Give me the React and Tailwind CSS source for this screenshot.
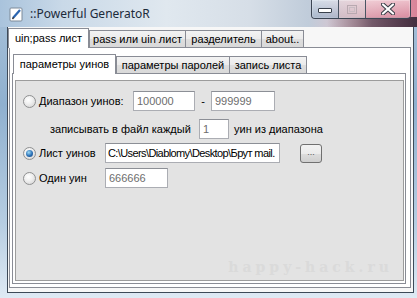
const Radio = ({ checked }) => (
  <span className="ml-[7px] w-[13px] h-[13px] rounded-full border border-[#8f9091] bg-[radial-gradient(circle_at_40%_35%,#ffffff_0%,#f0f0f0_40%,#cfcfcf_100%)] flex items-center justify-center shrink-0">
    {checked && (
      <span className="w-[7px] h-[7px] rounded-full bg-[radial-gradient(circle_at_40%_35%,#9fdcf7_0%,#2a6fb5_55%,#153e75_100%)]" />
    )}
  </span>
);

const Field = ({ value, className, dim = true }) => (
  <div
    className={
      "h-[20px] border border-[#abadb3] border-t-[#8c8f96] bg-white flex items-center whitespace-nowrap overflow-hidden shrink-0 " +
      (dim ? "text-[#6d6d6d] " : "text-black ") +
      className
    }
  >
    {value}
  </div>
);

const Tab = ({ label, active, className }) =>
  active ? (
    <div
      className={
        "relative z-10 h-[20px] -mb-px bg-white border border-b-0 border-[#898c95] flex items-center justify-center whitespace-nowrap " +
        className
      }
    >
      {label}
    </div>
  ) : (
    <div
      className={
        "h-[17px] bg-[linear-gradient(180deg,#f3f3f3_0%,#ebebeb_50%,#dedede_51%,#d9d9d9_100%)] border border-b-0 border-[#898c95] flex items-center justify-center whitespace-nowrap " +
        className
      }
    >
      {label}
    </div>
  );

export default function App() {
  return (
    <div className="w-[417px] h-[298px] overflow-hidden flex flex-col bg-[linear-gradient(180deg,#a9c2da_0%,#8fb0cf_35%,#b6cde2_75%,#dfeaf4_100%)] font-['Liberation_Sans',sans-serif] text-[11px] text-black">
      {/* title bar */}
      <div className="relative h-[27px] shrink-0 flex items-start bg-[linear-gradient(90deg,#a9c3dc_0%,#c9d9e8_15%,#e0e8ef_40%,#d6dee7_60%,#c0ccda_74%,#e6c0c8_86%,#d98398_100%)]">
        <div className="absolute right-0 bottom-0 w-[90px] h-[10px] bg-[linear-gradient(90deg,rgba(40,30,50,0)_0%,rgba(40,30,50,0.6)_50%,rgba(30,25,40,0.8)_100%)]" />
        <svg className="ml-[9px] mt-[7px]" width="15" height="15" viewBox="0 0 15 15">
          <rect x="1" y="1" width="12" height="13" rx="1" fill="#ffffff" stroke="#7d8a99" />
          <path d="M4 11 L11 3" stroke="#2b65b0" strokeWidth="2.2" />
          <path d="M3.5 12 L4.6 10.3" stroke="#333" strokeWidth="1.4" />
        </svg>
        <span className="ml-[6px] mt-[5px] font-['Noto_Sans',sans-serif] text-[12px] text-[#1c2a3a]">
          ::Powerful GeneratoR
        </span>
        <div className="relative ml-auto mr-[6px] flex h-[19px] border border-t-0 border-[#3c4654] rounded-b-[4px] overflow-hidden shadow-[inset_0_0_0_1px_rgba(255,255,255,0.5)]">
          <div className="w-[27px] h-full border-r border-[#4a5563] bg-[linear-gradient(180deg,rgba(220,230,240,0.7),rgba(150,170,195,0.6))] flex items-center justify-center">
            <div className="w-[14px] h-[5px] bg-white border border-[#39414c] rounded-[1px] mt-[3px]" />
          </div>
          <div className="w-[27px] h-full border-r border-[#4a5563] bg-[linear-gradient(180deg,rgba(235,225,230,0.6),rgba(200,180,190,0.5))] flex items-center justify-center">
            <div className="w-[10px] h-[9px] border border-[#b8a9b0] flex items-center justify-center">
              <div className="w-[6px] h-[5px] border border-[#c8bcc2]" />
            </div>
          </div>
          <div className="w-[44px] h-full bg-[linear-gradient(180deg,rgba(245,215,222,0.7),rgba(215,140,160,0.6))] flex items-center justify-center">
            <svg width="14" height="12" viewBox="0 0 14 12">
              <path d="M2 1.5 L12 10.5 M12 1.5 L2 10.5" stroke="#3a3f48" strokeWidth="4.2" strokeLinecap="round" />
              <path d="M2 1.5 L12 10.5 M12 1.5 L2 10.5" stroke="#ffffff" strokeWidth="2.2" strokeLinecap="round" />
            </svg>
          </div>
        </div>
      </div>

      {/* client area */}
      <div className="ml-[7px] w-[407px] h-[266px] shrink-0 bg-[#f7f7f7] border border-t-0 border-[#3e4a58] flex flex-col">
        {/* outer tabs */}
        <div className="mt-[1px] h-[19px] flex items-end">
          <Tab label="uin;pass лист" active className="w-[81px]" />
          <Tab label="pass или uin лист" className="w-[97px]" />
          <Tab label="разделитель" className="w-[77px] -ml-px" />
          <Tab label="about.." className="w-[43px] -ml-px" />
        </div>
        <div className="ml-[1px] w-[402px] h-[241px] bg-white border border-[#898c95] pt-[5px] pl-[2px] flex flex-col">
          {/* inner tabs */}
          <div className="h-[20px] ml-[1px] flex items-end">
            <Tab label="параметры уинов" active className="w-[103px]" />
            <Tab label="параметры паролей" className="w-[114px]" />
            <Tab label="запись листа" className="w-[78px] -ml-px" />
          </div>
          <div className="w-[394px] h-[211px] bg-white border border-[#898c95] pt-[6px] pl-[2px]">
            <div className="relative w-[389px] h-[201px] bg-[#e3e3e3] border border-[#9c9c9c] pt-[10px] whitespace-nowrap">
              {/* row 1 */}
              <div className="h-[20px] flex items-center">
                <Radio />
                <span className="ml-[3px] w-[94px]">Диапазон уинов:</span>
                <Field value="100000" className="w-[62px] px-[3px]" />
                <span className="w-[16px] text-center">-</span>
                <Field value="999999" className="w-[64px] px-[3px]" />
              </div>
              {/* row 2 */}
              <div className="mt-[8px] h-[20px] flex items-center pl-[34px]">
                <span className="w-[149px]">записывать в файл каждый</span>
                <Field value="1" className="w-[30px] px-[3px]" />
                <span className="ml-[5px]">уин из диапазона</span>
              </div>
              {/* row 3 */}
              <div className="mt-[4px] h-[20px] flex items-center">
                <Radio checked />
                <span className="ml-[3px] w-[66px]">Лист уинов</span>
                <Field
                  value="C:\Users\Diablomy\Desktop\Брут mail."
                  dim={false}
                  className="w-[175px] pl-[2px] tracking-[-0.6px]"
                />
                <button className="ml-[20px] w-[22px] h-[19px] rounded-[3px] border border-[#707070] bg-[linear-gradient(180deg,#f2f2f2_0%,#ebebeb_50%,#dddddd_51%,#cfcfcf_100%)] text-[9px] text-[#555] leading-none pb-[2px]">
                  ...
                </button>
              </div>
              {/* row 4 */}
              <div className="mt-[5px] h-[20px] flex items-center">
                <Radio />
                <span className="ml-[3px] w-[66px]">Один уин</span>
                <Field value="666666" className="w-[63px] px-[3px]" />
              </div>
              <span className="absolute right-[10px] top-[176px] font-['DejaVu_Serif',serif] font-bold text-[14px] tracking-[4px] text-[#dadada]">
                happy-hack.ru
              </span>
            </div>
          </div>
        </div>
      </div>
    </div>
  );
}
